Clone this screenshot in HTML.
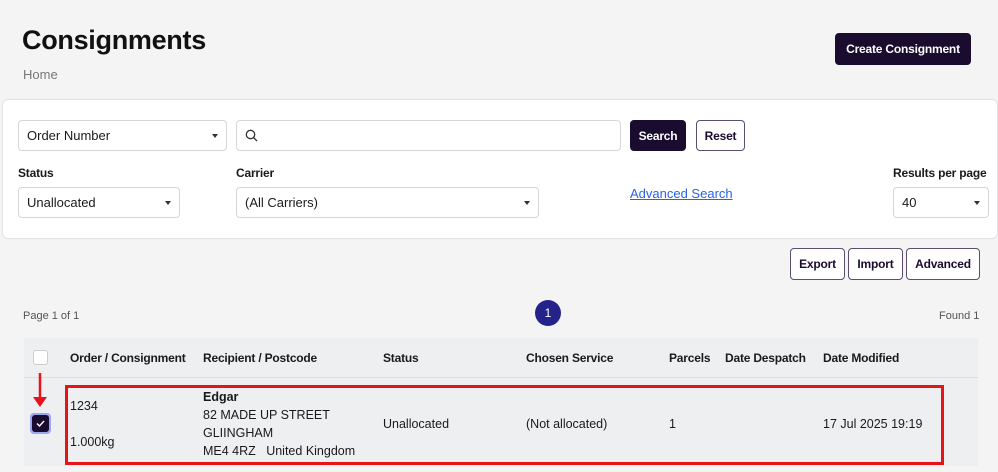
<!DOCTYPE html><html><head><style>
*{box-sizing:border-box;margin:0;padding:0}
body{width:998px;height:472px;overflow:hidden;background:#f4f4f5;font-family:"Liberation Sans",sans-serif;color:#1a1a1a;position:relative;font-size:13px}
.a{position:absolute}
.box{position:absolute;background:#fff;border:1px solid #d6d6d9;border-radius:4px;font-size:13px;padding-left:8px;display:flex;align-items:center}
.car{position:absolute;right:8px;top:50%;margin-top:-2px;border-left:3px solid transparent;border-right:3px solid transparent;border-top:4px solid #333}
.btn{position:absolute;border:1.5px solid #5a4d6e;border-radius:4px;background:#fff;color:#1a0c2e;font-weight:bold;font-size:12px;letter-spacing:-0.2px;display:flex;align-items:center;justify-content:center;white-space:nowrap}
.lbl{position:absolute;font-weight:bold;font-size:12px;letter-spacing:-0.2px;white-space:nowrap}
.th{position:absolute;top:351px;font-weight:bold;font-size:12px;letter-spacing:-0.2px;white-space:nowrap}
.td{position:absolute;font-size:12.5px;white-space:nowrap}
</style></head><body>
<div class="a" style="left:22px;top:25px;font-size:27px;font-weight:bold;color:#111;letter-spacing:-0.3px">Consignments</div>
<div class="a" style="left:23px;top:67px;font-size:13px;color:#777">Home</div>
<div class="btn" style="left:835px;top:33px;width:136px;height:32px;background:#1a0c2e;color:#fff;border-color:#1a0c2e;font-size:12px">Create Consignment</div>

<div class="a" style="left:2px;top:99px;width:996px;height:140px;background:#fff;border:1px solid #e2e2e4;border-radius:6px"></div>
<div class="box" style="left:18px;top:120px;width:209px;height:31px">Order Number<span class="car"></span></div>
<div class="box" style="left:236px;top:120px;width:385px;height:31px"><svg width="14" height="14" viewBox="0 0 14 14"><circle cx="5.5" cy="5.5" r="4.2" fill="none" stroke="#333" stroke-width="1.3"/><path d="M8.5 8.5L12 12" stroke="#333" stroke-width="1.3"/></svg></div>
<div class="btn" style="left:630px;top:120px;width:56px;height:31px;background:#1a0c2e;color:#fff;border-color:#1a0c2e">Search</div>
<div class="btn" style="left:696px;top:120px;width:49px;height:31px">Reset</div>
<div class="lbl" style="left:18px;top:166px">Status</div>
<div class="lbl" style="left:236px;top:166px">Carrier</div>
<div class="lbl" style="left:893px;top:166px">Results per page</div>
<div class="box" style="left:18px;top:187px;width:162px;height:31px">Unallocated<span class="car"></span></div>
<div class="box" style="left:236px;top:187px;width:303px;height:31px">(All Carriers)<span class="car"></span></div>
<div class="a" style="left:630px;top:186px;color:#2962e8;font-size:13px;text-decoration:underline">Advanced Search</div>
<div class="box" style="left:893px;top:187px;width:96px;height:31px">40<span class="car"></span></div>

<div class="btn" style="left:790px;top:248px;width:55px;height:32px">Export</div>
<div class="btn" style="left:848px;top:248px;width:55px;height:32px">Import</div>
<div class="btn" style="left:906px;top:248px;width:74px;height:32px">Advanced</div>

<div class="a" style="left:23px;top:310px;font-size:11px;color:#555">Page 1 of 1</div>
<div class="a" style="left:535px;top:300px;width:26px;height:26px;border-radius:50%;background:#24238a;color:#fff;font-size:12px;display:flex;align-items:center;justify-content:center">1</div>
<div class="a" style="left:939px;top:310px;font-size:11px;color:#555">Found 1</div>

<div class="a" style="left:24px;top:338px;width:954px;height:128px;background:#eeeff1"></div>
<div class="a" style="left:24px;top:377px;width:954px;height:1px;background:#dcdce0"></div>
<div class="a" style="left:33px;top:350px;width:15px;height:15px;background:#fff;border:1px solid #ccc;border-radius:3px"></div>
<div class="th" style="left:70px">Order / Consignment</div>
<div class="th" style="left:203px">Recipient / Postcode</div>
<div class="th" style="left:383px">Status</div>
<div class="th" style="left:526px">Chosen Service</div>
<div class="th" style="left:669px">Parcels</div>
<div class="th" style="left:725px">Date Despatch</div>
<div class="th" style="left:823px">Date Modified</div>

<svg class="a" style="left:28px;top:371px" width="24" height="38"><path d="M12 2V28" stroke="#e8121b" stroke-width="2.5"/><path d="M5 26L12 36L19 26Z" fill="#e8121b"/></svg>
<div class="a" style="left:30px;top:413px;width:21px;height:21px;border-radius:4px;background:#9aa8f0;padding:2px"><div style="width:17px;height:17px;background:#1a0c2e;border-radius:3px"><svg width="17" height="17"><path d="M5 8.5L7.5 11L12 6" fill="none" stroke="#fff" stroke-width="1.4"/></svg></div></div>

<div class="a" style="left:65px;top:385px;width:879px;height:80px;border:3px solid #e8121b"></div>
<div class="td" style="left:70px;top:399px">1234</div>
<div class="td" style="left:70px;top:435px">1.000kg</div>
<div class="td" style="left:203px;top:390px;font-weight:bold">Edgar</div>
<div class="td" style="left:203px;top:408px">82 MADE UP STREET</div>
<div class="td" style="left:203px;top:426px">GLIINGHAM</div>
<div class="td" style="left:203px;top:444px">ME4 4RZ&nbsp;&nbsp;&nbsp;United Kingdom</div>
<div class="td" style="left:383px;top:417px">Unallocated</div>
<div class="td" style="left:526px;top:417px">(Not allocated)</div>
<div class="td" style="left:669px;top:417px">1</div>
<div class="td" style="left:823px;top:417px">17 Jul 2025 19:19</div>
</body></html>
